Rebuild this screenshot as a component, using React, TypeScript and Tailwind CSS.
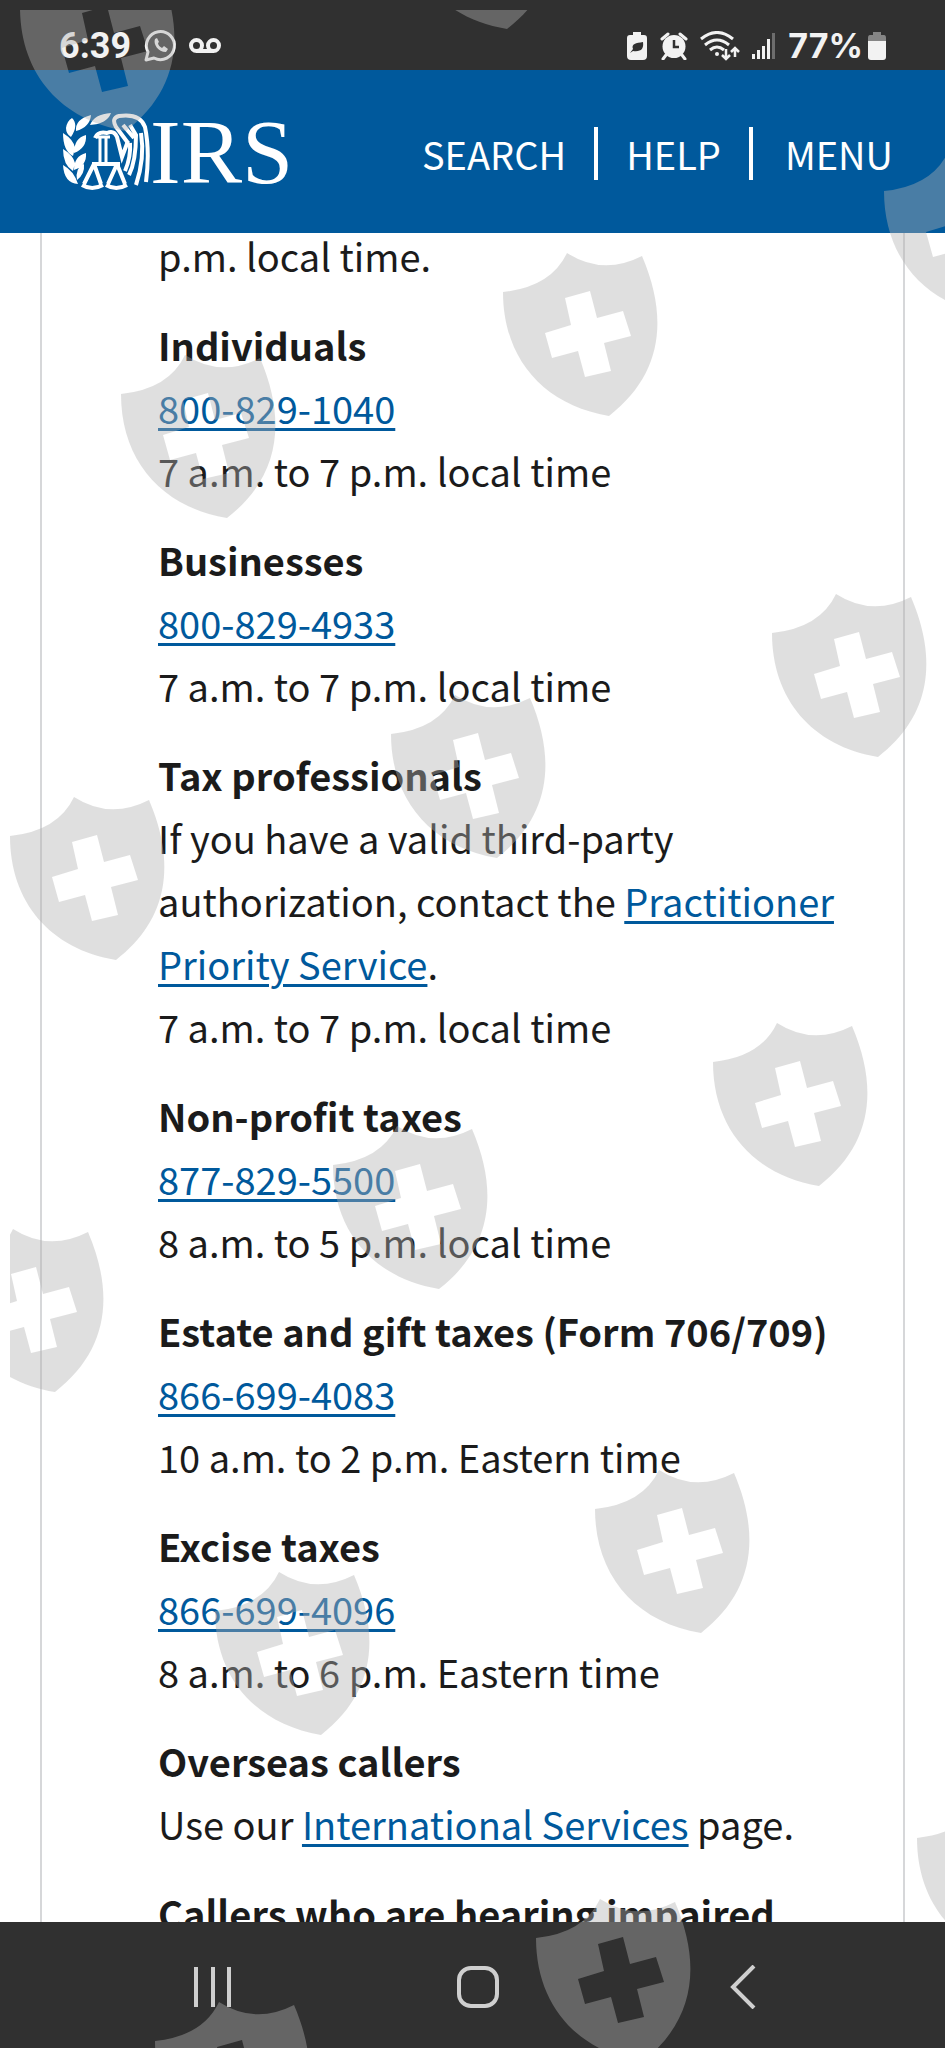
import type { ReactNode } from 'react';

const LINK = 'text-[#00599c] underline decoration-[3px] underline-offset-4';

const WATERMARKS = [
  [20, -32], [401, -134], [884, 152],
  [503, 253], [121, 355], [772, 594],
  [391, 695], [10, 797], [713, 1023],
  [333, 1126], [-51, 1229], [595, 1470],
  [215, 1572], [917, 1799], [536, 1899],
  [155, 2002],
];

const Watermarks = () => (
  <svg className="pointer-events-none absolute top-0 left-0 h-full w-full" aria-hidden="true">
    <defs>
      <clipPath id="edge">
        <rect x="10" y="10" width="100%" height="100%" />
      </clipPath>
      <path
        id="shield"
        fillRule="evenodd"
        d="M0 39Q48 34 64 0Q100 23 139 3C166 66 159 122 106 163C40 152 0 105 0 39ZM62 45L68 72L42 80L49 105L75 98L82 124L108 118L101 90L128 83L120 58L94 65L87 38Z"
      />
    </defs>
    <g clipPath="url(#edge)" fill="#b2b2b2" fillOpacity="0.41">
      {WATERMARKS.map(([x, y]) => (
        <use key={`${x}-${y}`} href="#shield" x={x} y={y} />
      ))}
    </g>
  </svg>
);

const StatusBar = () => (
  <div className="flex h-[70px] shrink-0 items-center justify-between bg-[#303030] pt-[22px] pr-[58px] pl-[59px] font-[Roboto,sans-serif] text-4xl font-bold text-[#f2f2f2]">
    <div className="flex items-center gap-3">
      <span>6:39</span>
      <svg width="34" height="34" viewBox="0 0 34 34" fill="none" stroke="currentColor" strokeWidth="3">
        <path d="M3 31L5 23A14 14 0 1 1 11 29Z" strokeLinejoin="round" />
        <path d="M12 10C10 15 15 23 23 23L25 20L21 17L19 19C17 18 15 16 15 14L16 13L14 9Z" fill="currentColor" stroke="none" />
      </svg>
      <svg width="32" height="16" viewBox="0 0 32 16" fill="none" stroke="currentColor" strokeWidth="4">
        <circle cx="7.500" cy="7.500" r="5.500" />
        <circle cx="24.500" cy="7.500" r="5.500" />
        <path d="M7 13H25" />
      </svg>
    </div>
    <div className="flex items-center gap-3">
      <svg width="22" height="28" viewBox="0 0 22 28" fill="currentColor">
        <path d="M7 0H15V3H18Q21 3 21 6V24Q21 28 17 28H5Q1 28 1 24V6Q1 3 4 3H7Z" />
        <path d="M17 10C18 17 15 20 7 19L4 21L7 17C5 12 10 11 17 10Z" fill="#303030" />
      </svg>
      <svg width="28" height="28" viewBox="0 0 28 28" fill="currentColor">
        <circle cx="14" cy="14.500" r="11.500" />
        <path d="M2 7L8 2M26 7L20 2M6 23L3 27M22 23L25 27" stroke="currentColor" strokeWidth="3" strokeLinecap="round" />
        <path d="M14 8V15H19" fill="none" stroke="#303030" strokeWidth="2.500" />
      </svg>
      <svg width="40" height="30" viewBox="0 0 40 30" fill="none" stroke="currentColor" strokeWidth="3">
        <path d="M1 8Q17 -5 33 8M5 14Q17 4 29 14M10 19Q17 13 24 19" />
        <circle cx="17" cy="23" r="2" fill="currentColor" stroke="none" />
        <path d="M26 18V28M22 24L26 28L30 24M35 26V17M31 21L35 17L39 21" strokeWidth="2.500" />
      </svg>
      <svg width="24" height="26" viewBox="0 0 24 26" fill="currentColor">
        <path d="M0 21H3V26H0ZM5 17H8V26H5ZM10 13H13V26H10ZM15 6H18V26H15Z" />
        <path d="M20 0H23V26H20Z" fill="#6d6d6d" />
      </svg>
      <div className="flex items-center gap-1">
        <span className="font-[Inter,sans-serif] text-[34px]">77%</span>
        <svg width="20" height="28" viewBox="0 0 20 28">
          <path d="M6 0H14V3H17Q19 3 19 6V10H1V6Q1 3 3 3H6Z" fill="#858585" />
          <path d="M1 9H19V25Q19 28 16 28H4Q1 28 1 25Z" fill="currentColor" />
        </svg>
      </div>
    </div>
  </div>
);

const Logo = () => (
  <a href="#" aria-label="IRS" className="flex items-center text-white">
    <svg width="88" height="78" viewBox="0 0 88 78" fill="none" stroke="currentColor" strokeWidth="4">
      <g fill="currentColor" stroke="none">
        <path d="M4 15Q5 8 10 5Q17 12 9 24Q4 21 4 15ZM14 18Q13 6 29 2Q28 14 14 18ZM28 12Q32 1 49 0Q45 11 28 12Z" />
        <path d="M1 20Q12 27 13 35L11 43Q1 38 1 20ZM12 40Q12 25 24 22Q25 35 12 40ZM1 36Q11 42 13 50L11 58Q1 52 1 36ZM12 57Q12 43 24 40Q25 53 12 57ZM1 52Q12 58 16 71Q2 70 1 52ZM15 67Q13 55 22 51Q23 61 15 67Z" />
      </g>
      <path d="M34 24H48M38 25V50M44 25V50" strokeWidth="3" />
      <path d="M30 51H58M32 51L22 71M32 51L39 71M55 51L46 71M55 51L63 71M20 72Q30 78 41 72M44 72Q54 78 65 72" />
      <path d="M33 25Q36 18 45 20Q52 17 55 24L60 44L66 28" />
      <path d="M66 30L54 14Q49 5 57 3Q78 0 83 14Q88 38 84 69" />
      <path d="M61 12L72 25M68 12L74 22Q74 48 67 62M79 20Q83 45 74 72M68 30Q69 44 63 58" />
    </svg>
    <span className="font-['Liberation_Serif',serif] text-[92px] leading-none">IRS</span>
  </a>
);

const Header = () => (
  <header className="flex h-[163px] shrink-0 items-center justify-between bg-[#00599c] pr-[52px] pl-[62px]">
    <Logo />
    <nav className="flex items-center pt-1 text-[38px] text-white">
      <button className="pr-7">SEARCH</button>
      <button className="border-x-4 border-white px-7 leading-[53px]">HELP</button>
      <button className="pl-8">MENU</button>
    </nav>
  </header>
);

const Entry = ({ title, children }: { title: string; children?: ReactNode }) => (
  <section className="mb-[26px]">
    <h2 className="font-bold">{title}</h2>
    {children}
  </section>
);

const Phone = ({ number, hours }: { number: string; hours: string }) => (
  <>
    <p>
      <a href={`tel:${number}`} className={LINK}>{number}</a>
    </p>
    <p>{hours}</p>
  </>
);

const NavBar = () => (
  <div className="grid h-[126px] shrink-0 grid-cols-3 place-items-center bg-[#303030] pt-1 pr-[70px] pl-20 text-[#cfcfcf]">
    <button aria-label="Recents">
      <svg width="40" height="40" viewBox="0 0 40 40" fill="currentColor">
        <path d="M1 0H5V40H1ZM18 0H22V40H18ZM34 0H38V40H34Z" />
      </svg>
    </button>
    <button aria-label="Home">
      <svg width="42" height="42" viewBox="0 0 42 42" fill="none" stroke="currentColor" strokeWidth="4">
        <rect x="2" y="2" width="38" height="38" rx="12" />
      </svg>
    </button>
    <button aria-label="Back">
      <svg width="26" height="44" viewBox="0 0 26 44" fill="none" stroke="currentColor" strokeWidth="4">
        <path d="M24 1L3 22L24 43" />
      </svg>
    </button>
  </div>
);

const App = () => (
  <div className="relative flex h-screen flex-col overflow-hidden bg-white font-['Noto_Sans_CJK_SC',sans-serif] text-[#1b1b1b]">
    <StatusBar />
    <Header />
    <main className="min-h-0 flex-1 overflow-hidden px-10">
      <div className="border-x-2 border-[#d6d7d9]">
        <div className="-mt-[9px] pr-15 pl-29 text-[38px] leading-[63px]">
          <p className="mb-[26px]">p.m. local time.</p>
          <Entry title="Individuals">
            <Phone number="800-829-1040" hours="7 a.m. to 7 p.m. local time" />
          </Entry>
          <Entry title="Businesses">
            <Phone number="800-829-4933" hours="7 a.m. to 7 p.m. local time" />
          </Entry>
          <Entry title="Tax professionals">
            <p>
              If you have a valid third-party authorization, contact the{' '}
              <a href="#" className={LINK}>Practitioner Priority Service</a>.
            </p>
            <p>7 a.m. to 7 p.m. local time</p>
          </Entry>
          <Entry title="Non-profit taxes">
            <Phone number="877-829-5500" hours="8 a.m. to 5 p.m. local time" />
          </Entry>
          <Entry title="Estate and gift taxes (Form 706/709)">
            <Phone number="866-699-4083" hours="10 a.m. to 2 p.m. Eastern time" />
          </Entry>
          <Entry title="Excise taxes">
            <Phone number="866-699-4096" hours="8 a.m. to 6 p.m. Eastern time" />
          </Entry>
          <Entry title="Overseas callers">
            <p>
              Use our <a href="#" className={LINK}>International Services</a> page.
            </p>
          </Entry>
          <Entry title="Callers who are hearing impaired" />
        </div>
      </div>
    </main>
    <NavBar />
    <Watermarks />
  </div>
);

export default App;
